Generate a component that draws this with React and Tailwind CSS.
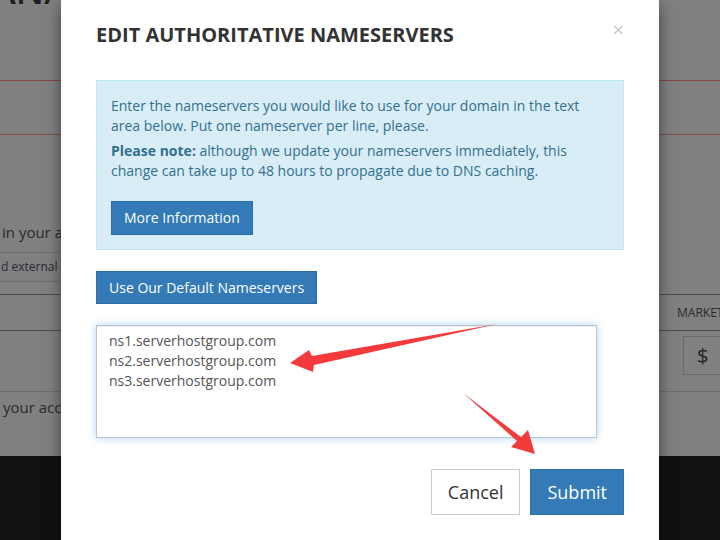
import React from "react";

const font = { fontFamily: '"Open Sans", "Liberation Sans", sans-serif' };

const PageBehind = () => (
  <div className="flex flex-col">
    <div className="h-[10px] overflow-hidden">
      <div className="-mt-[27px] -ml-[22px] text-[36px] font-semibold leading-[36px] text-[#1e1e1e] whitespace-nowrap">\AN/</div>
    </div>
    <div className="mt-[70px] h-px bg-[#8a4848]" />
    <div className="mt-[53px] h-px bg-[#8a4848]" />
    <div className="mt-[87px] h-[20px] pl-[2px] text-[15px] leading-[20px] text-[#2a2a2a] whitespace-nowrap">in your account</div>
    <div className="mt-[10px] h-px w-[110px] bg-[#6e6e6e]" />
    <div className="h-[28px] pl-[1px] text-[12px] leading-[28px] text-[#2e2638] whitespace-nowrap">d external dns</div>
    <div className="h-px w-[110px] bg-[#6e6e6e]" />
    <div className="mt-[12px] h-px bg-[#4e4e4e]" />
    <div className="h-[35px] pl-[677px] text-[12px] leading-[35px] text-[#2a2a2a] whitespace-nowrap">MARKET PRICE</div>
    <div className="h-px bg-[#4e4e4e]" />
    <div className="h-[60px] pl-[683px] pt-[5px]">
      <div className="w-[44px] h-[39px] border border-[#6a6a6a] flex items-center pl-[13px] text-[20px] text-[#222]">$</div>
    </div>
    <div className="h-px bg-[#6e6e6e]" />
    <div className="h-[64px] pl-[3px] pt-[5px] text-[15px] leading-[20px] text-[#2a2a2a] whitespace-nowrap">your account</div>
    <div className="h-[84px] bg-[#111111]" />
  </div>
);

const Arrows = () => (
  <svg className="absolute inset-0 pointer-events-none" width="720" height="540" viewBox="0 0 720 540">
    <polygon
      fill="#f33b3b"
      points="497,324 312,356 309,350 290,363 313,372 314,365"
    />
    <polygon
      fill="#f33b3b"
      points="463,393 521,437 528,430 535,454 511,447 517,441"
    />
  </svg>
);

export default function App() {
  return (
    <div className="relative w-[720px] h-[540px] overflow-hidden bg-[#808080]" style={font}>
      <PageBehind />

      <div className="absolute left-[61px] top-0 w-[598px] h-[560px] bg-white shadow-[0_5px_15px_rgba(0,0,0,0.5)]">
        <div className="flex flex-col px-[35px]">
          <div className="flex items-start justify-between pt-[22px]">
            <h4 className="text-[20px] font-bold leading-[26px] text-[#333]">EDIT AUTHORITATIVE NAMESERVERS</h4>
            <span className="mt-[-5px] text-[20px] leading-[26px] text-[#c8c8c8]">×</span>
          </div>

          <div className="mt-[32px] border border-[#bce8f1] bg-[#d9edf7] px-[14px] pt-[15px] pb-[14px] text-[14px] leading-[20px] text-[#31708f]">
            <p>Enter the nameservers you would like to use for your domain in the text area below. Put one nameserver per line, please.</p>
            <p className="mt-[5px]">
              <strong className="font-bold">Please note:</strong> although we update your nameservers immediately, this change can take up to 48 hours to propagate due to DNS caching.
            </p>
            <button className="mt-[20px] h-[34px] px-[12px] border border-[#2e6da4] bg-[#337ab7] text-[14px] text-white">More Information</button>
          </div>

          <div className="mt-[21px]">
            <button className="h-[33px] px-[12px] border border-[#2e6da4] bg-[#337ab7] text-[14px] text-white">Use Our Default Nameservers</button>
          </div>

          <textarea
            readOnly
            rows={5}
            defaultValue={"ns1.serverhostgroup.com\nns2.serverhostgroup.com\nns3.serverhostgroup.com"}
            className="mt-[21px] w-[501px] h-[113px] resize-none border border-[#b8c4d0] px-[12px] pt-[5px] pb-[6px] text-[14px] leading-[20px] text-[#555] outline-none shadow-[inset_0_1px_1px_rgba(0,0,0,0.075),0_0_8px_rgba(102,175,233,0.55)]"
            style={font}
          />

          <div className="mt-[31px] flex justify-end gap-[10px]">
            <button className="h-[46px] px-[16px] border border-[#ccc] bg-white text-[18px] text-[#333]">Cancel</button>
            <button className="h-[46px] px-[16px] border border-[#2e6da4] bg-[#337ab7] text-[18px] text-white">Submit</button>
          </div>
        </div>
      </div>

      <Arrows />
    </div>
  );
}
